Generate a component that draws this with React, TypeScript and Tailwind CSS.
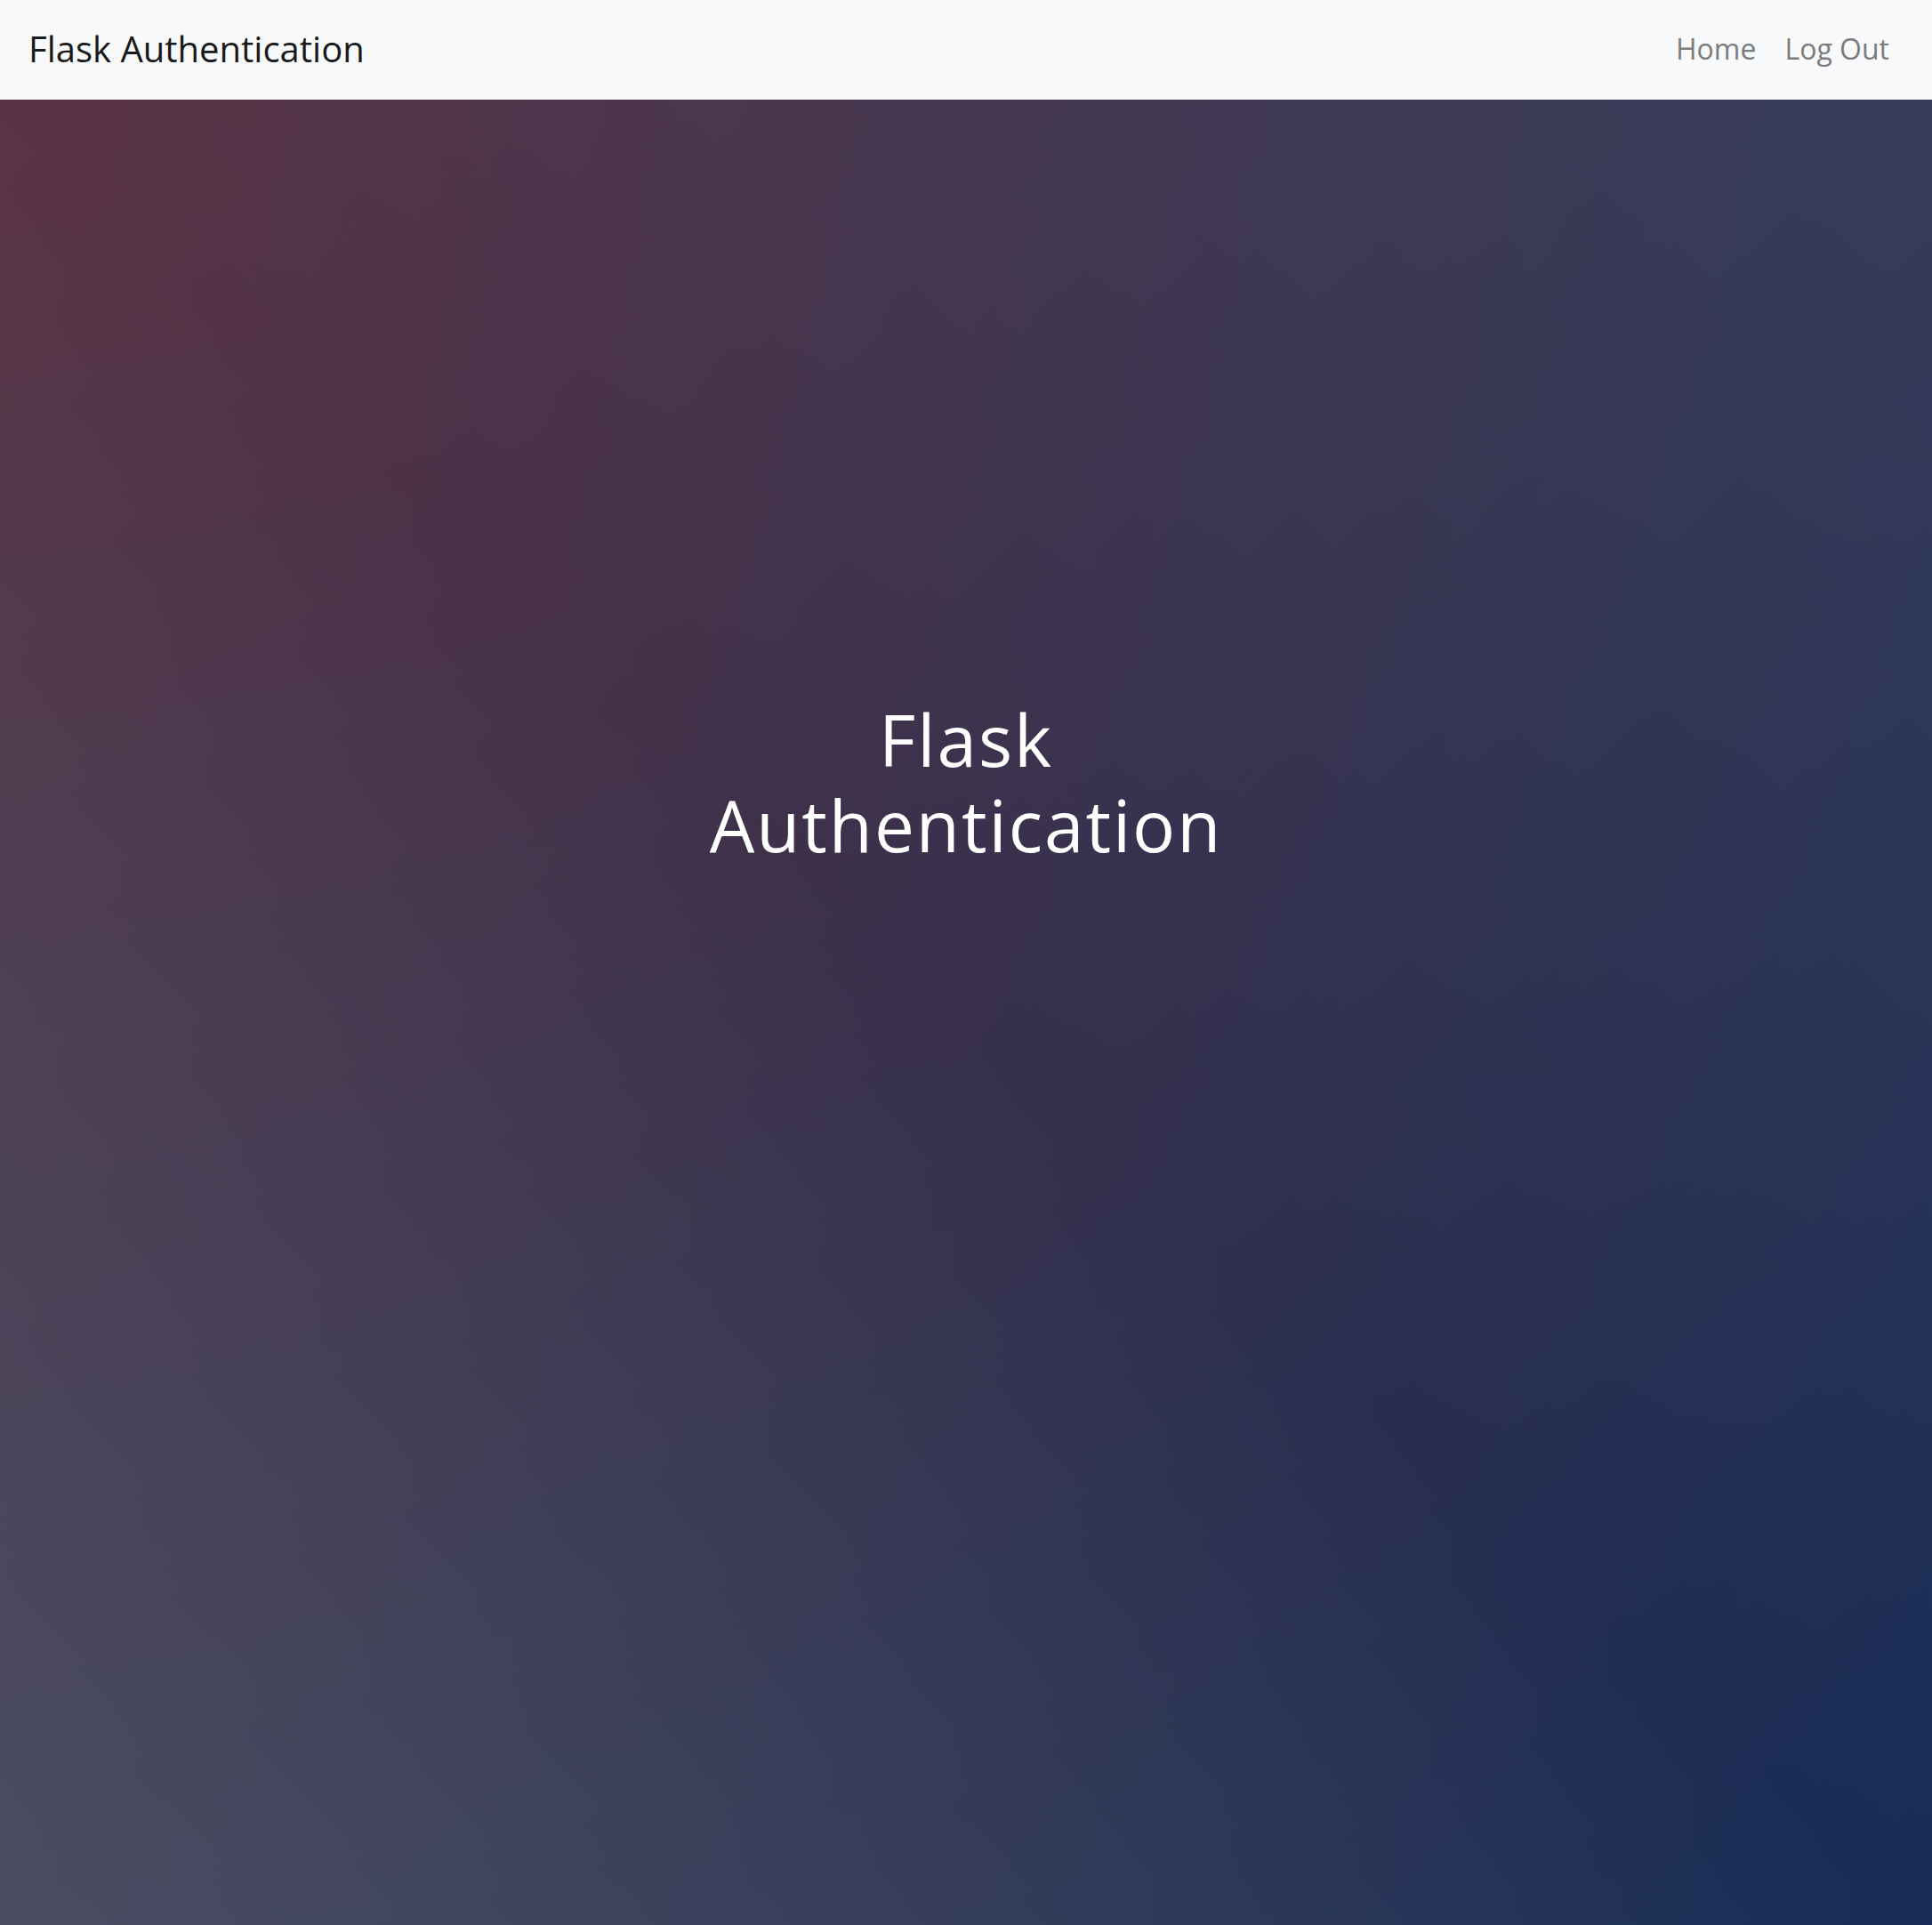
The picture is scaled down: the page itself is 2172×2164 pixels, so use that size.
import React from "react";

export default function App() {
  return (
    <div
      className="min-h-screen flex flex-col"
      style={{ fontFamily: '"Open Sans", "Noto Sans", sans-serif' }}
    >
      <nav className="h-[112px] bg-[#f8f9fa] px-[32px] flex items-center justify-between">
        <a className="text-[40px] leading-[60px] text-[#1a1a1a] pt-[9px] pb-[11px]">Flask Authentication</a>
        <ul className="flex items-center">
          <li className="px-[16px] text-[32px] leading-[48px] text-[#7c7c7d] pb-[2px]">Home</li>
          <li className="px-[16px] text-[32px] leading-[48px] text-[#7c7c7d] pb-[2px]">Log Out</li>
        </ul>
      </nav>
      <main className="flex-1 bg-[linear-gradient(to_top_right,rgba(92,106,120,0.5)_0%,rgba(92,106,120,0)_50%,rgba(51,78,113,0)_50%,rgba(51,78,113,0.4)_100%),linear-gradient(to_bottom_right,#5c3344_0%,#38304c_50%,#162c56_100%)] flex justify-center pt-[671px]">
        <h1 className="w-[640px] text-center text-white text-[80px] leading-[96px] tracking-[2px] font-normal">
          Flask Authentication
        </h1>
      </main>
    </div>
  );
}
